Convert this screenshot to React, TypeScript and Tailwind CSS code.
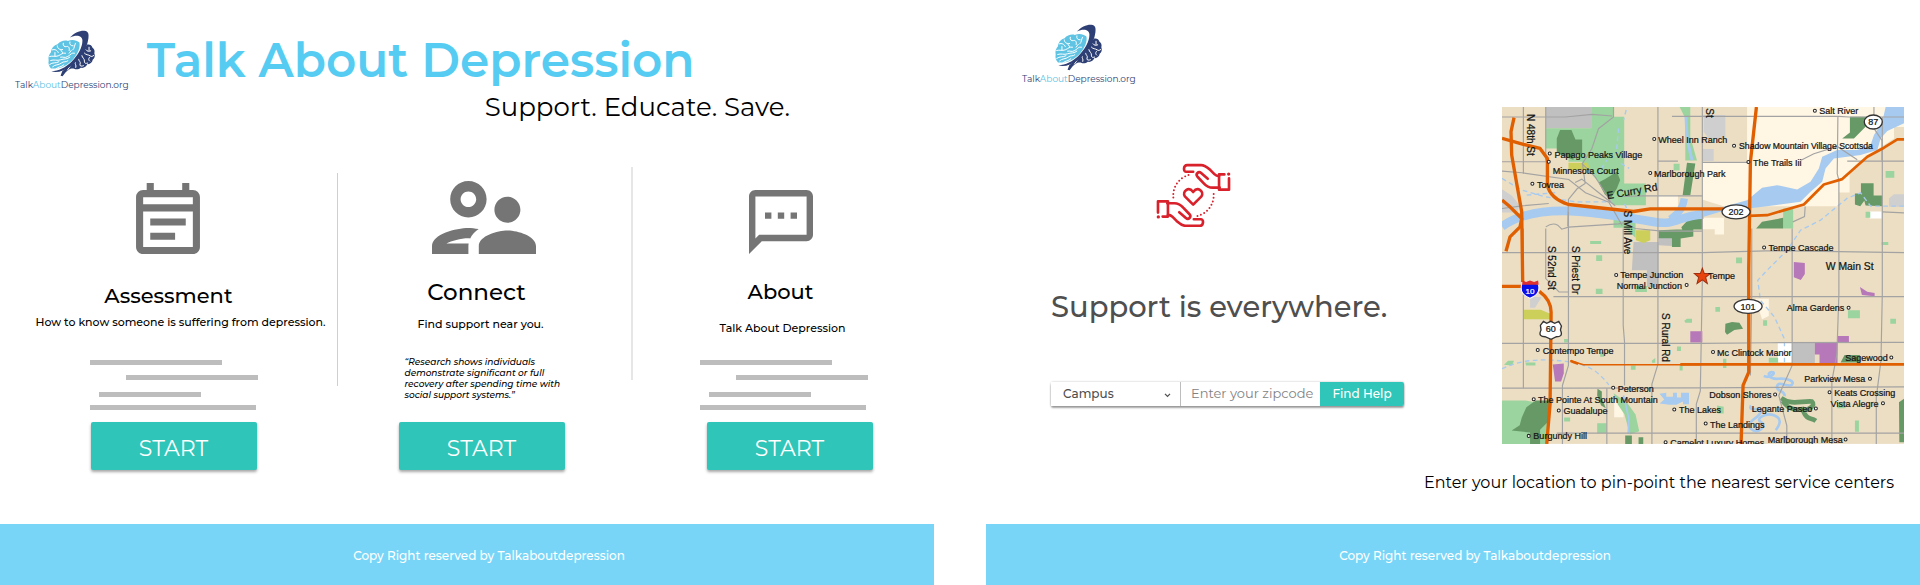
import React from "react";

const ROAD = "#a3a3a3";

function BrainMark() {
  return (
    <svg viewBox="120 44 146 142" className="h-[47px] w-[49px]" aria-hidden="true">
      <path
        fill="#5fc3e4"
        d="M131 160c-6-6-9-14-7-24-2-10 1-19 7-25 1-12 9-21 20-24 8-9 20-13 31-10 12-5 26-3 35 5 3 15-5 34-19 50-17 19-40 31-67 28z"
      />
      <g fill="none" stroke="#fff" strokeWidth="3" strokeLinecap="round">
        <path d="M135 104c8-3 15 1 18 8M150 92c1 9 7 12 16 11M168 84c-2 8 4 12 10 10s10 4 8 12M188 80c-2 8 3 12 10 12M205 84c-4 8-2 14-8 20" />
        <path d="M127 124c10-3 16 2 26-2s12-10 22-8M160 126c8-2 12 4 22-2s10-12 20-10M130 136c10-4 20 2 30-2s20 0 28-8" />
        <path d="M127 148c10-8 18-2 28-8M136 155c8-8 18-4 26-11s14-1 20-7M146 161c8-7 16-4 24-12" />
        <path d="M143 112v10M166 112l-6-8M192 106l-6 8" />
      </g>
      <path
        fill="#2d3f74"
        d="M240 88c8-2 14 2 16 9 6 4 8 11 6 17 3 8 1 15-5 20-1 8-8 14-16 13-3 8-11 13-20 11-6 5-14 6-20 3-6-1-12 0-17 4l-8 6-10 13-6-2 5-13 30-24 26-29z"
      />
      <g fill="none" stroke="#fff" strokeWidth="3" strokeLinecap="round">
        <path d="M237 104c4 6 10 5 14 3M232 114c5 6 12 4 17 8s8 1 11-1M224 121c2 8 9 10 8 17s4 8 10 6M214 131c1 8 8 9 5 16s6 7 10 5M204 141c-2 7 5 8 2 16M246 96v10M247 127c-3 4-3 8 1 11M190 152l-9 13" />
      </g>
      <path
        fill="#2d3f74"
        d="M188 67c12-14 30-22 44-21 12 1 14 10 12 24-4 32-26 64-54 84-20 14-40 20-58 15 22-1 44-12 61-29 20-20 33-43 33-64 0-15-18-19-38-9z"
      />
    </svg>
  );
}

function Logo() {
  return (
    <a href="#home" className="flex w-fit flex-col items-center">
      <BrainMark />
      <span className="text-[9px] leading-[16px] text-[#2d3f74]">
        Talk<span className="text-[#5fc3e4]">About</span>Depression.org
      </span>
    </a>
  );
}

function NoteIcon() {
  return (
    <svg viewBox="3 1 18 20" className="h-[71px] w-[64px]" fill="#757575" aria-hidden="true">
      <path d="M19 3h-1V1h-2v2H8V1H6v2H5c-1.100 0-2 .9-2 2v14c0 1.100.9 2 2 2h14c1.100 0 2-.9 2-2V5c0-1.100-.9-2-2-2zm0 16H5V9h14v10zM5 7V5h14v2H5zm2 4h10v2H7zm0 4h7v2H7z" />
    </svg>
  );
}

function PeopleIcon() {
  return (
    <svg viewBox="2 5 20 14" className="h-[73px] w-[104px]" fill="#757575" aria-hidden="true">
      <path d="M9 12c1.930 0 3.500-1.570 3.500-3.500S10.930 5 9 5 5.500 6.570 5.500 8.500 7.070 12 9 12zm0-5c.83 0 1.500.67 1.500 1.500S9.830 10 9 10s-1.500-.67-1.500-1.500S8.170 7 9 7zm.05 10H4.770c.99-.5 2.700-1 4.230-1 .11 0 .23.01.34.02.34-.73.93-1.330 1.640-1.810-.73-.13-1.420-.21-1.980-.21-2.340 0-7 1.170-7 3.500V19h7v-1.500c0-.17.02-.34.05-.5zm7.450-2.500c-1.840 0-5.500 1.010-5.500 3V19h11v-1.500c0-1.990-3.660-3-5.500-3zm1.210-1.820c.76-.43 1.290-1.240 1.290-2.180C19 9.120 17.880 8 16.500 8S14 9.120 14 10.500c0 .94.53 1.750 1.290 2.180.36.2.77.32 1.210.32s.85-.12 1.210-.32z" />
    </svg>
  );
}

function ChatIcon() {
  return (
    <svg viewBox="2 2 20 20" className="size-[64px]" fill="#757575" aria-hidden="true">
      <path d="M20 2H4c-1.100 0-2 .9-2 2v18l4-4h14c1.100 0 2-.9 2-2V4c0-1.100-.9-2-2-2zm0 14H5.170L4 17.170V4h16v12zM7 9h2v2H7zm4 0h2v2h-2zm4 0h2v2h-2z" />
    </svg>
  );
}

function Hand() {
  return (
    <>
      <path d="M160 66h-22c-8 0-8-20 4-20h42c12 0 20 8 28 15l12 12c4 4 8 6 14 6" />
      <path d="M204 87l-20-17c-8-7-18 3-11 11l19 20c8 9 16 13 27 13h21" />
      <path d="M254 74h-16v46h30V86" />
    </>
  );
}

function CareIcon() {
  return (
    <svg viewBox="48 40 226 192" className="h-[64px] w-[75px]" aria-hidden="true">
      <g fill="none" stroke="#d9212c" strokeWidth="8" strokeLinecap="round" strokeLinejoin="round">
        <Hand />
        <g transform="rotate(180 161 137.500)">
          <Hand />
        </g>
        <path d="M160 165l-25-25c-9-15 11-31 25-13 14-18 34-2 25 13z" />
      </g>
      <g fill="none" stroke="#d9212c" strokeWidth="6" strokeLinecap="round" strokeDasharray="0 11">
        <path d="M146 76a64 64 0 0 0-45 73" />
        <path d="M173 199a64 64 0 0 0 48-73" />
      </g>
      <circle cx="267" cy="73" r="5" fill="#d9212c" />
      <circle cx="55" cy="202" r="5" fill="#d9212c" />
    </svg>
  );
}

function TextLines() {
  return (
    <div className="flex w-[168px] flex-col" aria-hidden="true">
      <div className="h-[5px] w-[132px] bg-[#bdbdbd]" />
      <div className="mt-[10px] ml-9 h-[5px] bg-[#bdbdbd]" />
      <div className="mt-3 ml-[9px] h-[5px] w-[102px] bg-[#bdbdbd]" />
      <div className="mt-2 h-[5px] w-[166px] bg-[#bdbdbd]" />
    </div>
  );
}

function StartButton() {
  return (
    <button
      type="button"
      className="h-12 w-[166px] rounded-[2px] bg-[#2fc5b8] pt-1 text-[22px] text-white shadow-[0_2px_3px_rgba(0,0,0,0.35)]"
    >
      START
    </button>
  );
}

function Footer() {
  return (
    <footer className="flex h-[61px] items-center justify-center bg-[#78d5f7] pt-[2px] pl-11 text-[12px] font-medium text-white">
      <p>Copy Right reserved by Talkaboutdepression</p>
    </footer>
  );
}

type Dot = [number, number];
type Label = [string, number, number, number?];

const labels: Label[] = [
  ["Papago Peaks Village", 193, 188],
  ["Minnesota Court", 188, 236],
  ["Tovrea", 141, 279],
  ["Wheel Inn Ranch", 504, 143],
  ["Marlborough Park", 491, 245],
  ["Salt River", 986, 58],
  ["Shadow Mountain Village Scottsda", 746, 163, 26],
  ["The Trails Iii", 788, 212],
  ["Tempe Cascade", 834, 468],
  ["Tempe Junction", 390, 549],
  ["Normal Junction", 380, 580],
  ["Tempe", 653, 551],
  ["Contempo Tempe", 158, 776],
  ["Peterson", 383, 889],
  ["The Pointe At South Mountain", 144, 922],
  ["Guadalupe", 220, 956],
  ["Burgundy Hill", 130, 1031],
  ["The Lakes", 566, 953],
  ["Camelot Luxury Homes", 540, 1051],
  ["Alma Gardens", 889, 648],
  ["Mc Clintock Manor", 680, 782],
  ["Sagewood", 1064, 797],
  ["Parkview Mesa", 941, 861],
  ["Keats Crossing", 1031, 902],
  ["Vista Alegre", 1020, 935],
  ["Dobson Shores", 657, 908],
  ["Legante Paseo", 784, 950],
  ["The Landings", 659, 996],
  ["Marlborough Mesa", 832, 1043],
  ["W Main St", 1006, 524, 31],
];

const dots: Dot[] = [
  [179, 175], [176, 200], [127, 266], [492, 132], [480, 234], [973, 47], [731, 152],
  [774, 201], [821, 457], [378, 539], [589, 569], [143, 764], [369, 877], [131, 911],
  [206, 945], [116, 1021], [552, 942], [526, 1040], [1074, 637], [668, 770], [1202, 786],
  [1138, 850], [1017, 890], [1177, 923], [854, 897], [976, 939], [646, 984], [1065, 1032],
];

const streets: Label[] = [
  ["N 48th St", 110, 57],
  ["S 52nd St", 173, 452],
  ["S Priest Dr", 245, 452],
  ["S Mill Ave", 402, 346],
  ["S Rural Rd", 514, 653],
];

const parks =
  "M550 206h18v20h-18zM300 437h33v9h-33zM318 480h18v17h-18zM370 352h50l16 26v50l-30-30h-36zM878 340h30v60h-30zM1185 228h26v20h-26zM1125 350h14v18h-14zM737 487h18v17h-18zM1173 440h20v9h-20zM317 580h20v16h-20zM435 572h35v18h-35zM582 676l8-6h15v12h-20zM560 753h12v14h-12zM485 795l10-7v14h-10zM422 810h14v13h-14zM568 810h9v15h-9zM222 731h12v10h-12zM42 808l12-12h18l-6 14zM106 801h30v9h-28zM330 770h12v14h-12zM222 966h18v12h-18zM321 983h28v30h-28zM36 915h70l66 12v118H36zM370 893l40 28 26 36 11 50-28 10-16-60-20-30zM675 635h14v14h-14zM818 675h12v16h-12zM835 787h28v15h-28zM698 790h10v28h-10zM1072 645h36v24h-36zM1199 670h17v15h-17zM1093 975h12v34h-12zM680 930l20 4v20h-18zM1040 923h25v15h-25z";

const woods =
  "M200 130l10-25h34l12 28h20v42l-26 4v16l-32-14-18-10zM325 262l20-10 35-22 10 25-10 25-20 32-16-14zM590 203l25 2-15 95h-23zM505 405l72-3h32v22l-38 6v25h-26v-26h-40zM573 396l22-24 41-3v34h-60zM1078 65h55l-8 30-35 35h-35l23-18zM1093 295h18v-31h38v37h26v32l-50-2-4-14-12 16-16-5zM797 400l18-20 63-12v32zM65 1005l24-16 6-22 14-32 28-20h41v60l-28 28v42h-30v-34zM322 880l13 8v20l12 30-14-8-12-30zM405 1020h20v25h-20zM445 1025h14v20h-14zM705 685l20-5 22 2 11 18-26 4-22 14-6-8zM1062 779h46v22h-58zM1225 920l15-10v130h-14z";

const creekLines =
  "M320 240l20-30 10-15M408 45l-8 30M385 100l-8 90M392 205l25 15M36 250l60 35 70 20 90 15 110 0M110 300l90-8M420 360l-20-40M1240 333h-100l-30-40-40 16-80 66-60 30-40 60-60 60-28 30 8 60 42 50 30 66v70M36 820c60-30 130-30 190-22s90 20 130 70";

function TempeMap() {
  return (
    <svg viewBox="36 36 1204 1009" className="block h-auto w-[402px]" role="img" aria-label="Map of Tempe">
      <rect x="36" y="36" width="1204" height="1009" fill="#ecdec3" />
      <path
        fill="#fff6e4"
        d="M770 36h470v60h-30v34l-60 40-73 65v57h-32v41H700l-65-20V200h135zM503 300h60v35h-60zM636 368h65v50h-28v-16h-37zM372 915h28v50h-28zM795 610h40v52l-20 10z"
      />
      <path fill="#c0c0c0" d="M167 36h136v64H167zM430 440h75v85l-2 50h-33v-50h-45zM905 742h68v63h-68zM505 425h40v27l-40-2z" />
      <path fill="#cfcfcf" d="M640 60h65v70h-50l-15-20zM638 162h32v36h-32zM36 282l30 20 24 30-10 20-44 0zM120 605h35l-20 32h-15zM1195 310l15-13h30v38h-45z" />
      <path fill="#fff" d="M862 742h43v58h-43zM1137 349h36v21h-36z" />
      <path
        fill="#9bd49e"
        d="M303 36h67v29h32v200h65v65h-97l-30-50-65-80h-40v-40h-68v-60h136zM568 36h32v90l20 70h-35V70z"
      />
      <path fill="#9bd49e" d={parks} />
      <path fill="#679967" d={woods} />
      <g fill="none" stroke="#679967" strokeWidth="14">
        <path d="M872 908c30 22 60 8 92 10 14 12-12 26-26 28 12 30 22 18 38 30M876 916c20 30 44 28 66 24" />
      </g>
      <path fill="#cccf59" d="M235 203h58l6 22h-64zM437 405h43v30l-20 8-23-8zM102 643h50l28 12v17h-78z" />
      <path
        fill="#b678b8"
        d="M910 500l33 3v33l-12 18-21-8zM1108 575l22 14 22 4v10l-38-4zM1041 722h34v18h-34zM973 742h68v63h-54v-28h-14zM600 708h36v33h-36zM188 807l33-3v30l-8 24h-18z"
      />
      <g fill="none" stroke="#a6caf0">
        <path strokeWidth="26" d="M36 394C80 362 150 347 220 347S420 368 490 380 560 362 640 358" />
        <path strokeWidth="22" d="M540 372c30-20 38-36 42-62" />
        <path strokeWidth="9" d="M587 65l4 70 14 60" />
        <path strokeWidth="8" d="M820 842c20 8 40-12 24-12s-10 22 20 20 50 8 40 18-40-14-44 4 26 12 22 30M782 930c-14 22 40 0 30 20s-50 30-30 50 50-10 30-20 14-30 40-20 14 30 4 44" />
        <path strokeWidth="5" d="M400 900l16 70-2 45" />
      </g>
      <path
        fill="#a6caf0"
        d="M508 895l20-3v12h20v-12h12v14h12v-14h24v34h-18v-8l-20 10h-20l-30-4 14-12zM630 345l70-10 70-20 45-37 45-8 60 13 40-23 25-40 10-35 45-20h60l40-15 10-30 25-40 10-44h55v49l-50 23-20 22-10 35-50 15-80 10-25 30-10 40-35 30-30 30-100 13-140 17-60 18z"
      />
      <path fill="none" stroke="#a6caf0" strokeWidth="4" strokeDasharray="14 10" d={creekLines} />
      <g fill="none" stroke={ROAD} strokeWidth="3.500">
        <path d="M36 66h190l80-8 60 5M545 64h500l30 2h165M36 200h140M503 198h60M636 202h140M1070 198h170M36 472h600l190-5h70l344 5M190 604h1050M36 744h600l200-2 404-1M36 878h200l400-1 604-3M200 1013h1040M400 304l60-2h176M1175 350l65 3" />
        <path d="M100 36v200M100 400v478M167 36v160M167 400v150l20 20 20 20h30M235 350v460l-18 60v175M350 878v167M399 400v290l4 50v130M503 36v770l-18 60v179M636 36v520l-6 330-12 40v119M1042 66l-2 170 5 20v340l-6 180-15 80v189M1175 66v530l-4 200-14 110v139M905 400v410l-40 90 24 90v55M784 400v200l-4 240" />
        <path d="M370 36v30l-45 35-20 60-28 44 8 60-24 16-26 32-2 80M36 228l60 5 140 20 50 40 70 28 40 70M275 205l40 40 50 80M255 262l20-10 50 40 50 40M36 340l60-8 80-7M167 395q20-14 36-5l12 12 20-6 150-10 20-4 30 18 80 8h120M930 196l40-20 70-22 60 40M1150 100l24 36v60M1150 66v-30M907 380l35-16 2-30" />
      </g>
      <g fill="none" stroke="#e05f00" strokeWidth="10" strokeLinejoin="round">
        <path d="M72 68l-9 42 2 70 30 170 3 210" />
        <path d="M36 130l64 18 50 12 22 30v80q8 40 63 58l195 21 50-8h220" />
        <path d="M36 315l24 20 35 35-5 25-30 30-12 43" />
        <path d="M798 36l-18 164-5 320v310l-17 40-6 175" />
        <path strokeWidth="8" d="M775 362l55-2 110-32 60-60 55-16 75-67 50-27 40-25h20" />
        <path d="M36 573h90M148 588q37 27 35 67l-3 270-10 120" />
        <path strokeWidth="5" d="M240 796l40 12h350" />
        <path strokeWidth="8" d="M242 797l22 8M570 807h670" />
      </g>
      <g fill="#fff" stroke="#333" strokeWidth="4">
        <ellipse cx="1148" cy="81" rx="27" ry="21" />
        <ellipse cx="737" cy="350" rx="42" ry="21" />
        <ellipse cx="773" cy="633" rx="42" ry="21" />
        <path d="M160 678l10 6 12-6 12 6 12-6 8 14-3 12c8 18-2 20-12 20l-16 8-18-8c-12 0-20-4-12-20l-2-14z" />
      </g>
      <path fill="#0a10e8" stroke="#fff" strokeWidth="3" d="M95 566q26-6 50 0c6 26-6 34-25 43-19-9-31-17-25-43z" />
      <path fill="#e03030" d="M98 556l10 4 12-4 12 4 12-4 2 12H96z" />
      <path fill="#e8430c" stroke="#a03010" strokeWidth="3" d="M636 519l6 16h18l-14 11 5 19-15-11-16 11 5-19-13-11h18z" />
      <g
        fontFamily='"Liberation Sans", Arial, sans-serif'
        fill="#141414"
        stroke="#141414"
        strokeWidth="0.700"
        fontSize="27"
      >
        {labels.map(([text, x, y, size]) => (
          <text key={text} x={x} y={y} fontSize={size ?? 27}>
            {text}
          </text>
        ))}
        <text transform="translate(352 312) rotate(-10)" fontSize="31">
          E Curry Rd
        </text>
        <text transform="translate(646 40) rotate(90)" fontSize="30">
          St
        </text>
        {streets.map(([text, x, y]) => (
          <text key={text} transform={`translate(${x} ${y}) rotate(90)`} fontSize="30">
            {text}
          </text>
        ))}
        <g textAnchor="middle">
          <text x="1148" y="91">87</text>
          <text x="737" y="360">202</text>
          <text x="773" y="643">101</text>
          <text x="182" y="711">60</text>
          <text x="120" y="595" fill="#fff" stroke="#fff" fontSize="24">10</text>
        </g>
      </g>
      <g fill="#fff" stroke="#222" strokeWidth="3">
        {dots.map(([cx, cy]) => (
          <circle key={`${cx}-${cy}`} cx={cx} cy={cy} r="4.500" />
        ))}
      </g>
    </svg>
  );
}

function HomePanel() {
  return (
    <section className="flex min-h-screen flex-col">
      <header className="flex h-[167px] gap-[18px] pl-[15px]">
        <div className="pt-[30px]">
          <Logo />
        </div>
        <div className="pt-8">
          <h1 className="text-[47px] leading-[58px] font-semibold text-[#56ccf2]">Talk About Depression</h1>
          <p className="pl-[338px] text-[26px] leading-[34px] whitespace-nowrap text-black">
            Support. Educate. Save.
          </p>
        </div>
      </header>
      <div className="grid flex-1 grid-cols-[337fr_1px_293fr_2px_301fr] text-black">
        <article className="flex flex-col items-center">
          <div className="flex h-[187px] flex-col items-center">
            <div className="flex h-[87px] items-end">
              <NoteIcon />
            </div>
            <h2 className="mt-7 text-[21px] leading-7 font-medium">Assessment</h2>
            <p className="mt-1 pl-6 text-[11px] leading-4 font-medium whitespace-nowrap">
              How to know someone is suffering from depression.
            </p>
          </div>
          <div className="flex flex-col items-center pl-[10px]">
            <div className="h-[68px] pt-[6px]">
              <TextLines />
            </div>
            <StartButton />
          </div>
        </article>
        <div className="mt-[6px] h-[213px] bg-[#cfcfcf]" />
        <article className="flex flex-col items-center">
          <div className="flex h-[187px] flex-col items-center">
            <div className="flex h-[87px] items-end">
              <PeopleIcon />
            </div>
            <h2 className="mt-6 pr-4 text-[23px] leading-7 font-medium">Connect</h2>
            <p className="mt-[10px] pr-2 text-[11px] leading-4 font-medium">Find support near you.</p>
          </div>
          <div className="flex flex-col items-center pr-[6px]">
            <p className="h-[68px] w-[166px] pt-[2px] pl-[6px] text-[9px] leading-[11px] font-medium whitespace-nowrap italic">
              “Research shows individuals
              <br />
              demonstrate significant or full
              <br />
              recovery after spending time with
              <br />
              social support systems.”
            </p>
            <StartButton />
          </div>
        </article>
        <div className="h-[213px] bg-[#e6e6e6]" />
        <article className="flex flex-col items-center">
          <div className="flex h-[187px] flex-col items-center pr-[6px]">
            <div className="flex h-[87px] items-end">
              <ChatIcon />
            </div>
            <h2 className="mt-6 text-[21px] leading-7 font-medium">About</h2>
            <p className="mt-[14px] pl-1 text-[11px] leading-4 font-medium">Talk About Depression</p>
          </div>
          <div className="flex flex-col items-center pl-3">
            <div className="h-[68px] pt-[6px] pr-3">
              <TextLines />
            </div>
            <StartButton />
          </div>
        </article>
      </div>
      <Footer />
    </section>
  );
}

function SupportPanel() {
  return (
    <section className="flex min-h-screen flex-col">
      <div className="flex flex-1 justify-between">
        <div className="flex flex-col">
          <div className="pt-6 pl-9">
            <Logo />
          </div>
          <div className="flex flex-col pt-[76px] pl-[65px]">
            <div className="pl-[105px]">
              <CareIcon />
            </div>
            <h2 className="mt-[60px] text-[29px] leading-10 font-medium text-[#4f4f4f]">Support is everywhere.</h2>
            <form
              className="mt-[55px] flex h-6 w-[353px] rounded-[2px] text-[13px] shadow-[0_2px_2px_rgba(0,0,0,0.35),0_0_2px_rgba(0,0,0,0.3)]"
              onSubmit={(event) => event.preventDefault()}
            >
              <div className="relative flex w-[130px] border-r border-[#bdbdbd]">
                <select
                  aria-label="Location type"
                  className="w-full appearance-none bg-white pl-3 text-[12px] font-medium text-[#4f4f4f]"
                >
                  <option>Campus</option>
                </select>
                <svg
                  viewBox="0 0 8 6"
                  className="pointer-events-none absolute top-[11px] right-[9px] h-[5px] w-[7px]"
                  fill="none"
                  stroke="#4f4f4f"
                  strokeWidth="1.500"
                  aria-hidden="true"
                >
                  <path d="M1 1l3 3 3-3" />
                </svg>
              </div>
              <input
                type="text"
                aria-label="Zipcode"
                placeholder="Enter your zipcode"
                className="w-[139px] bg-white pl-[10px] placeholder:text-[#828282]"
              />
              <button type="submit" className="flex-1 rounded-r-[2px] bg-[#2fc5b8] text-[12px] font-medium text-white">
                Find Help
              </button>
            </form>
          </div>
        </div>
        <figure className="flex shrink-0 flex-col items-end pt-[107px] pr-4">
          <TempeMap />
          <figcaption className="mt-[27px] pr-[10px] text-[16px] leading-6 text-black">
            Enter your location to pin-point the nearest service centers
          </figcaption>
        </figure>
      </div>
      <Footer />
    </section>
  );
}

export default function App() {
  return (
    <main className="grid min-h-screen grid-cols-2 gap-[52px] bg-white font-[Montserrat,Inter,sans-serif]">
      <HomePanel />
      <SupportPanel />
    </main>
  );
}
